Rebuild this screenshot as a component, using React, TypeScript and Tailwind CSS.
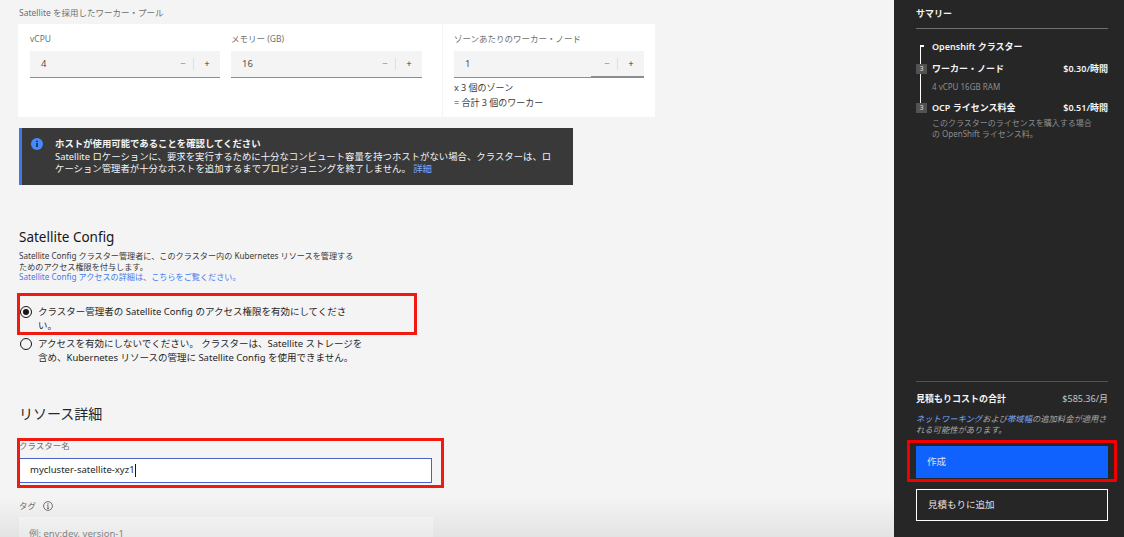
const font = "font-['Noto_Sans','Noto_Sans_CJK_JP',sans-serif]";

const Stepper = ({ label, value, className, busy }: { label: string; value: string; className: string; busy?: boolean }) => (
  <div className={className}>
    <div className="text-[8.5px] leading-[12px] text-[#6f6f6f] h-[12px] mb-[6px]">{label}</div>
    <div className="relative h-[27px] bg-[#f4f4f4] border-b border-[#8d8d8d] flex items-center pl-[11px] text-[9.5px] text-[#525252]">
      <span className="flex-1">{value}</span>
      <span className="w-[16px] text-center font-semibold text-[#a8a8a8]">−</span>
      <span className="w-px h-[12px] bg-[#e0e0e0] ml-[2px]" />
      <span className="w-[26px] text-center text-[#393939]">+</span>
      {busy && <span className="absolute right-0 bottom-[-1px] w-[53px] h-[2px] bg-[#8d8d8d]" />}
    </div>
  </div>
);

const Radio = ({ checked }: { checked?: boolean }) => (
  <span className="w-[12px] h-[12px] rounded-full border border-[#161616] flex items-center justify-center shrink-0 mt-[1px]">
    {checked && <span className="w-[6px] h-[6px] rounded-full bg-[#161616]" />}
  </span>
);

const SummaryRow = ({ count, name, price }: { count: string; name: string; price: string }) => (
  <div className="relative flex items-center h-[14px]">
    <span className="w-[11px] h-[10px] bg-[#525252] text-[7px] leading-[10px] text-center text-[#e0e0e0] mr-[5px]">{count}</span>
    <span className="flex-1 text-[9px] font-semibold text-[#f4f4f4]">{name}</span>
    <span className="text-[9px] font-semibold text-[#f4f4f4]">{price}</span>
  </div>
);

export default function App() {
  return (
    <div className={`${font} relative flex w-[1124px] h-[537px] overflow-hidden bg-[#f4f4f4]`}>
      <main className="w-[894px] pl-[18px] relative">
        <div className="pt-[7px] h-[24px] pl-px text-[8.5px] leading-[12px] text-[#6f6f6f]">Satellite を採用したワーカー・プール</div>

        <div className="w-[637px] h-[93px] bg-white flex">
          <div className="w-[425px] pl-[12px] pt-[9px] flex gap-[11px] border-r border-[#f4f4f4]">
            <Stepper label="vCPU" value="4" className="w-[190px]" />
            <Stepper label="メモリー (GB)" value="16" className="w-[191px]" />
          </div>
          <div className="pl-[11px] pt-[9px] w-[201px]">
            <Stepper label="ゾーンあたりのワーカー・ノード" value="1" className="w-[190px]" busy />
            <div className="mt-[2px] text-[9px] leading-[15px] text-[#393939]">
              <div>x 3 個のゾーン</div>
              <div>= 合計 3 個のワーカー</div>
            </div>
          </div>
        </div>

        <div className="mt-[11px] ml-px w-[554px] h-[57px] bg-[#393939] border-l-[3px] border-[#4178e8] flex pl-[9px] pt-[10px] text-[9.4px] leading-[12.5px] text-[#f4f4f4]">
          <svg width="12" height="12" viewBox="0 0 12 12" className="shrink-0 mr-[12px]">
            <circle cx="6" cy="6" r="6" fill="#4589ff" />
            <rect x="5.3" y="5" width="1.4" height="4" fill="#161616" />
            <rect x="5.3" y="2.7" width="1.4" height="1.4" fill="#161616" />
          </svg>
          <div className="w-[504px]">
            <div className="font-semibold">ホストが使用可能であることを確認してください</div>
            <div>
              Satellite ロケーションに、要求を実行するために十分なコンピュート容量を持つホストがない場合、クラスターは、ロケーション管理者が十分なホストを追加するまでプロビジョニングを終了しません。 <span className="text-[#78a9ff]">詳細</span>
            </div>
          </div>
        </div>

        <h2 className="mt-[43px] ml-px text-[13.5px] leading-[18px] text-[#161616]">Satellite Config</h2>
        <div className="mt-[5px] ml-px w-[337px] h-[32px] text-[8.15px] leading-[10.5px] text-[#393939]">
          Satellite Config クラスター管理者に、このクラスター内の Kubernetes リソースを管理するためのアクセス権限を付与します。
          <div className="text-[#3f7cf0]">Satellite Config アクセスの詳細は、こちらをご覧ください。</div>
        </div>

        <div className="mt-[22px] pl-[2px] w-[345px] flex flex-col gap-[4px] text-[9.5px] leading-[14px] text-[#262626]">
          <label className="flex gap-[6px]">
            <Radio checked />
            <span className="w-[322px]">クラスター管理者の Satellite Config のアクセス権限を有効にしてください。</span>
          </label>
          <label className="flex gap-[6px]">
            <Radio />
            <span className="w-[325px]">アクセスを有効にしないでください。 クラスターは、Satellite ストレージを含め、Kubernetes リソースの管理に Satellite Config を使用できません。</span>
          </label>
        </div>

        <h2 className="mt-[39px] ml-px text-[14px] leading-[20px] text-[#262626]">リソース詳細</h2>
        <div className="mt-[16px] ml-px text-[8.5px] leading-[12px] text-[#6f6f6f]">クラスター名</div>
        <div className="mt-[6px] ml-px w-[413px] h-[25px] bg-white border border-[#4a63c9] pl-[10px] flex items-center text-[9.5px] text-[#262626]">
          mycluster-satellite-xyz1<span className="w-px h-[13px] bg-[#161616]" />
        </div>
        <div className="mt-[17px] ml-px h-[12px] flex items-center gap-[7px] text-[8.5px] text-[#6f6f6f]">
          タグ
          <svg width="10" height="10" viewBox="0 0 10 10" fill="none" stroke="#525252" strokeWidth="0.8">
            <circle cx="5" cy="5" r="4.4" />
            <path d="M5 4.4V7.4M4 7.4H6M4.2 4.4H5" />
            <circle cx="5" cy="2.9" r="0.3" />
          </svg>
        </div>
        <div className="mt-[5px] ml-px w-[414px] h-[30px] bg-[#fbfbfb] pl-[10px] pt-[10px] text-[9.5px] leading-[13px] text-[#8d8d8d]">例: env:dev, version-1</div>

        {/* red annotation boxes */}
        <div className="absolute left-[17px] top-[293px] w-[400px] h-[42px] border-[3px] border-[#f01a10]" />
        <div className="absolute left-[17px] top-[438px] w-[427px] h-[50px] border-[3px] border-[#f01a10]" />
        <div className="absolute left-0 right-0 bottom-0 h-[40px] bg-gradient-to-t from-black/[0.07] to-transparent" />
      </main>

      <aside className="relative w-[230px] bg-[#262626] pl-[22px] pr-[16px] flex flex-col">
        <div className="pt-[8px] pb-[8px] text-[9px] leading-[12px] font-semibold text-[#f4f4f4] border-b border-[#6f6f6f]">サマリー</div>

        <div className="relative mt-[11px]">
          <div className="absolute left-[4px] top-[5px] w-[4px] h-[2px] bg-white" />
          <div className="absolute left-[4px] top-[5px] w-px h-[58px] bg-white" />
          <div className="pl-[16px] h-[14px] text-[9px] leading-[14px] font-semibold text-[#f4f4f4]">Openshift クラスター</div>
          <div className="mt-[8px]">
            <SummaryRow count="3" name="ワーカー・ノード" price="$0.30/時間" />
          </div>
          <div className="mt-[4px] h-[13px] pl-[16px] text-[8px] leading-[13px] text-[#8d8d8d]">4 vCPU 16GB RAM</div>
          <div className="mt-[8px]">
            <SummaryRow count="3" name="OCP ライセンス料金" price="$0.51/時間" />
          </div>
          <div className="mt-[2px] pl-[16px] w-[180px] text-[8px] leading-[11px] text-[#8d8d8d]">
            このクラスターのライセンスを購入する場合の OpenShift ライセンス料。
          </div>
        </div>

        <div className="mt-auto border-t border-[#525252] pt-[10px] pb-[16px]">
          <div className="flex justify-between text-[9px] leading-[13px] text-[#f4f4f4]">
            <span className="font-semibold">見積もりコストの合計</span>
            <span className="text-[#c6c6c6]">$585.36/月</span>
          </div>
          <div className="mt-[8px] text-[8.3px] leading-[11px] italic text-[#a8a8a8]">
            <span className="text-[#78a9ff]">ネットワーキング</span>および<span className="text-[#78a9ff]">帯域幅</span>の追加料金が適用される可能性があります。
          </div>
          <div className="mt-[11px] h-[32px] bg-[#0f62fe] pl-[11px] flex items-center text-[9.5px] text-[#e0e0e0]">作成</div>
          <div className="mt-[11px] h-[32px] border border-white pl-[11px] flex items-center text-[9.5px] text-[#e0e0e0]">見積もりに追加</div>
        </div>

        <div className="absolute left-[13px] top-[440px] w-[210px] h-[42px] border-[3px] border-[#f00000]" />
      </aside>
    </div>
  );
}
